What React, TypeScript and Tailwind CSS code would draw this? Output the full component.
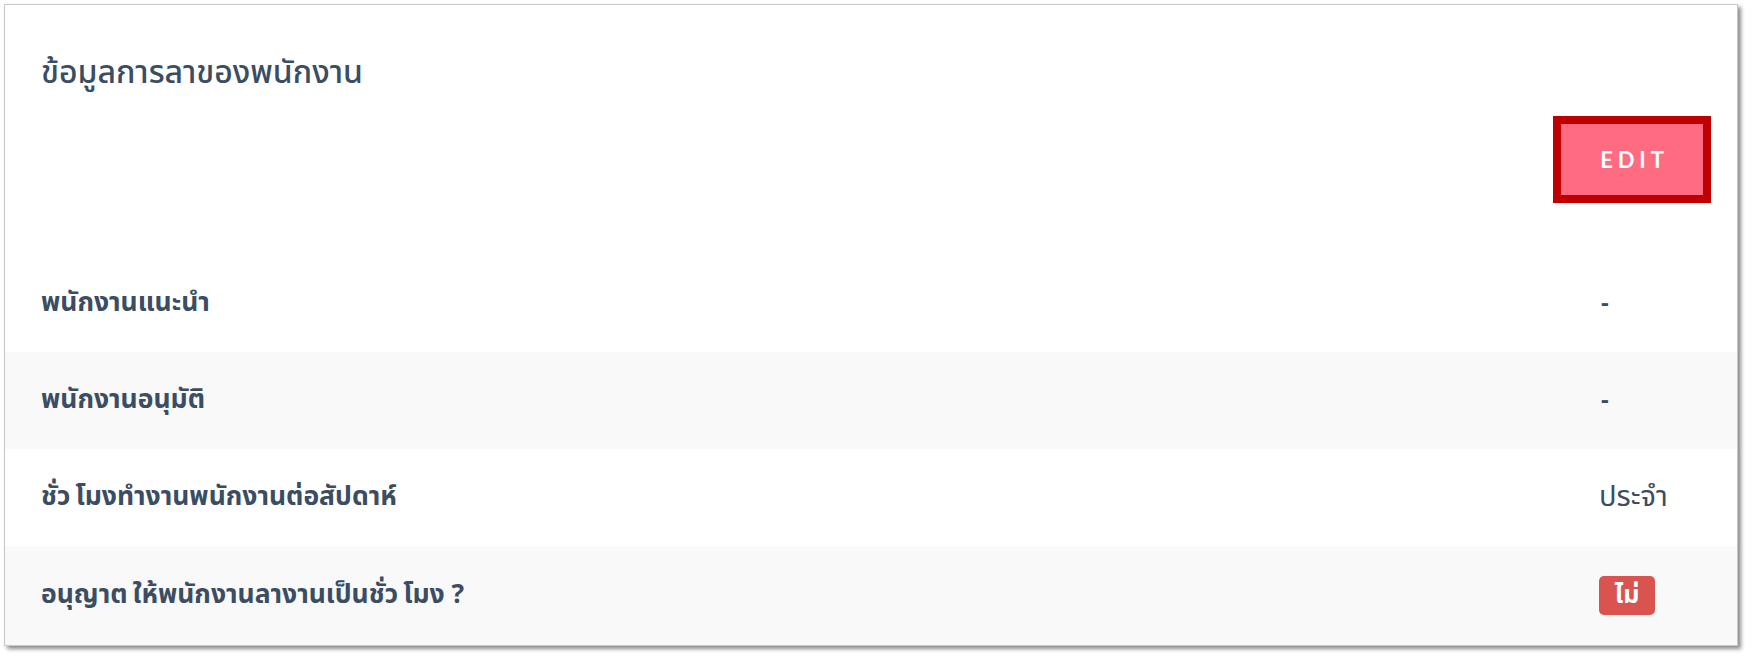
import React from "react";

const Gap = ({ children }: { children: React.ReactNode }) => <span className="ml-[5px]">{children}</span>;

const rows: { label: React.ReactNode; value: React.ReactNode; gray: boolean }[] = [
  { label: "พนักงานแนะนำ", value: <span className="pl-[2px] text-[24px] font-bold">-</span>, gray: false },
  { label: "พนักงานอนุมัติ", value: <span className="pl-[2px] text-[24px] font-bold">-</span>, gray: true },
  {
    label: (
      <>
        ชั่ว<Gap>โมงทำงานพนักงานต่อสัปดาห์</Gap>
      </>
    ),
    value: <span className="text-[29px]">ประจำ</span>,
    gray: false,
  },
  {
    label: (
      <>
        อนุญาต<Gap>ให้พนักงานลางานเป็นชั่ว</Gap>
        <Gap>โมง ?</Gap>
      </>
    ),
    value: (
      <span className="inline-flex h-[39px] w-[56px] items-center justify-center rounded-[5px] bg-[#d9534f] text-[25px] font-bold text-white">
        ไม่
      </span>
    ),
    gray: true,
  },
];

export default function App() {
  return (
    <div
      className="min-h-[662px] bg-white pl-[4px] pt-[4px]"
      style={{ fontFamily: '"Noto Sans Thai", "Noto Sans", "Liberation Sans", sans-serif' }}
    >
      <div className="w-[1734px] border border-[#c8c8c8] bg-white text-[#3b4d62] shadow-[3px_3px_4px_rgba(0,0,0,0.45)]">
        <div className="px-[36px] pt-[48px]">
          <h1 className="text-[32px] leading-[40px] font-medium">ข้อมูลการลาของพนักงาน</h1>
        </div>
        <div className="flex justify-end pr-[26px] pt-[23px] pb-[52px]">
          <button
            className="flex h-[87px] w-[158px] items-center justify-center border-[8px] border-[#c00000] bg-[#ff6b81] pl-[5px] text-[22px] font-bold tracking-[0.22em] text-white"
            style={{ fontFamily: 'Lato, "Open Sans", sans-serif' }}
          >
            EDIT
          </button>
        </div>
        {rows.map((r, i) => (
          <div
            key={i}
            className={`flex h-[97px] items-center pl-[36px] ${r.gray ? "bg-[#f9f9f9]" : "bg-white"} ${i === 3 ? "h-[99px]" : ""}`}
          >
            <div className="flex-1 text-[26.5px] font-bold">{r.label}</div>
            <div className="w-[138px] shrink-0">{r.value}</div>
          </div>
        ))}
      </div>
    </div>
  );
}
